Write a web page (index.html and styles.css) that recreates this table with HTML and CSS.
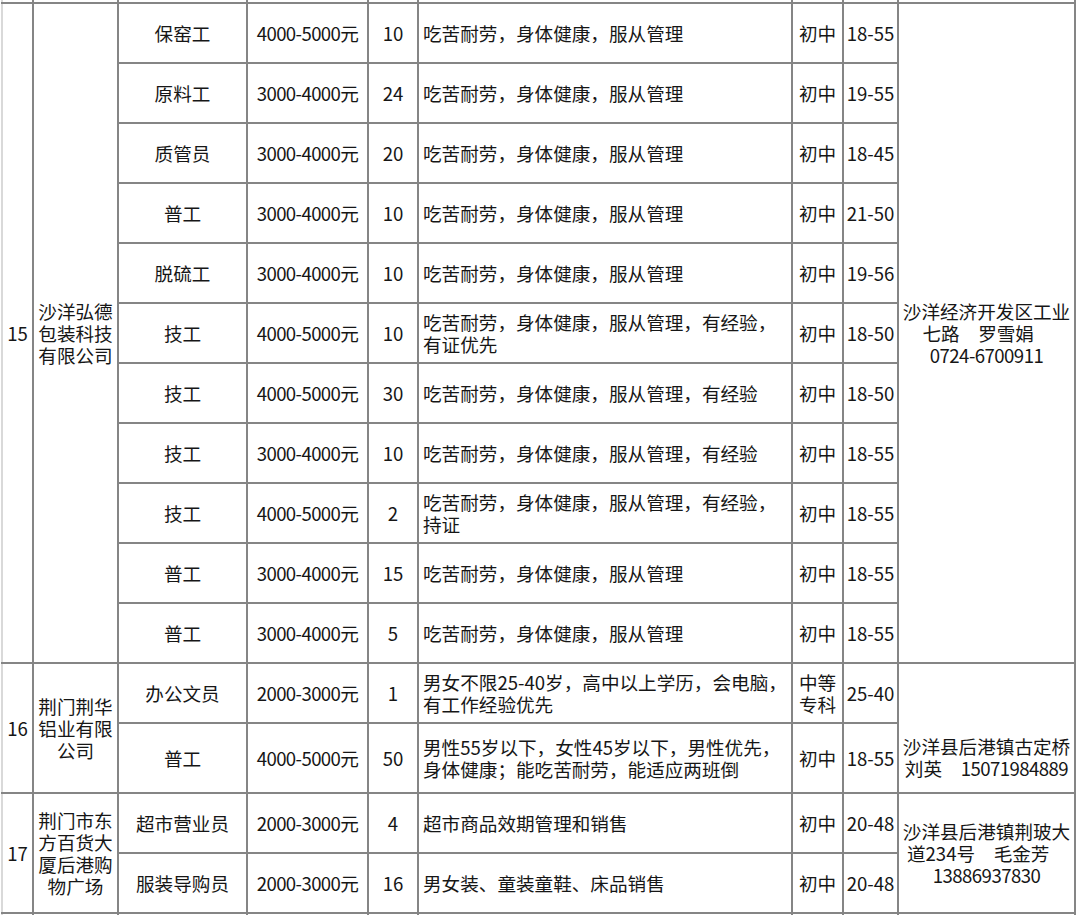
FILE: index.html
```html
<!DOCTYPE html>
<html lang="zh-CN">
<head>
<meta charset="utf-8">
<title>招聘信息</title>
<link rel="stylesheet" href="styles.css">
</head>
<body>
<table class="jobs">
  <colgroup>
    <col class="c-no"><col class="c-co"><col class="c-job"><col class="c-pay"><col class="c-cnt"><col class="c-req"><col class="c-edu"><col class="c-age"><col class="c-addr">
  </colgroup>
  <tbody>
    <tr class="stub top"><td class="no"></td><td></td><td></td><td></td><td></td><td></td><td></td><td></td><td></td></tr>

    <tr>
      <td class="no" rowspan="11">15</td>
      <td class="co" rowspan="11">沙洋弘德包装科技有限公司</td>
      <td>保窑工</td><td class="pay">4000-5000元</td><td>10</td><td class="req">吃苦耐劳，身体健康，服从管理</td><td>初中</td><td>18-55</td>
      <td class="addr" rowspan="11">沙洋经济开发区工业<br>七路　罗雪娟&nbsp;&nbsp;&nbsp;&nbsp;<br><span class="tel">0724-6700911</span></td>
    </tr>
    <tr><td>原料工</td><td class="pay">3000-4000元</td><td>24</td><td class="req">吃苦耐劳，身体健康，服从管理</td><td>初中</td><td>19-55</td></tr>
    <tr><td>质管员</td><td class="pay">3000-4000元</td><td>20</td><td class="req">吃苦耐劳，身体健康，服从管理</td><td>初中</td><td>18-45</td></tr>
    <tr><td>普工</td><td class="pay">3000-4000元</td><td>10</td><td class="req">吃苦耐劳，身体健康，服从管理</td><td>初中</td><td>21-50</td></tr>
    <tr><td>脱硫工</td><td class="pay">3000-4000元</td><td>10</td><td class="req">吃苦耐劳，身体健康，服从管理</td><td>初中</td><td>19-56</td></tr>
    <tr><td>技工</td><td class="pay">4000-5000元</td><td>10</td><td class="req">吃苦耐劳，身体健康，服从管理，有经验，<br>有证优先</td><td>初中</td><td>18-50</td></tr>
    <tr><td>技工</td><td class="pay">4000-5000元</td><td>30</td><td class="req">吃苦耐劳，身体健康，服从管理，有经验</td><td>初中</td><td>18-50</td></tr>
    <tr><td>技工</td><td class="pay">3000-4000元</td><td>10</td><td class="req">吃苦耐劳，身体健康，服从管理，有经验</td><td>初中</td><td>18-55</td></tr>
    <tr><td>技工</td><td class="pay">4000-5000元</td><td>2</td><td class="req">吃苦耐劳，身体健康，服从管理，有经验，<br>持证</td><td>初中</td><td>18-55</td></tr>
    <tr><td>普工</td><td class="pay">3000-4000元</td><td>15</td><td class="req">吃苦耐劳，身体健康，服从管理</td><td>初中</td><td>18-55</td></tr>
    <tr><td>普工</td><td class="pay">3000-4000元</td><td>5</td><td class="req">吃苦耐劳，身体健康，服从管理</td><td>初中</td><td>18-55</td></tr>

    <tr>
      <td class="no" rowspan="2">16</td>
      <td class="co" rowspan="2">荆门荆华铝业有限公司</td>
      <td>办公文员</td><td class="pay">2000-3000元</td><td>1</td><td class="req">男女不限25-40岁，高中以上学历，会电脑，<br>有工作经验优先</td><td>中等<br>专科</td><td>25-40</td>
      <td class="addr low" rowspan="2">沙洋县后港镇古定桥<br>刘英　<span class="tel">15071984889</span></td>
    </tr>
    <tr class="tall"><td>普工</td><td class="pay">4000-5000元</td><td>50</td><td class="req">男性55岁以下，女性45岁以下，男性优先，<br>身体健康；能吃苦耐劳，能适应两班倒</td><td>初中</td><td>18-55</td></tr>

    <tr>
      <td class="no" rowspan="2">17</td>
      <td class="co" rowspan="2">荆门市东方百货大厦后港购物广场</td>
      <td>超市营业员</td><td class="pay">2000-3000元</td><td>4</td><td class="req">超市商品效期管理和销售</td><td>初中</td><td>20-48</td>
      <td class="addr" rowspan="2">沙洋县后港镇荆玻大<br>道234号　毛金芳&nbsp;&nbsp;&nbsp;&nbsp;<br><span class="tel">13886937830</span></td>
    </tr>
    <tr><td>服装导购员</td><td class="pay">2000-3000元</td><td>16</td><td class="req">男女装、童装童鞋、床品销售</td><td>初中</td><td>20-48</td></tr>

    <tr class="stub bottom"><td class="no"></td><td></td><td></td><td></td><td></td><td></td><td></td><td></td><td></td></tr>
  </tbody>
</table>
</body>
</html>
```

FILE: styles.css
```css
html, body {
  margin: 0;
  padding: 0;
  background: #ffffff;
  height: 915px;
  overflow: hidden;
}

body {
  font-family: "Noto Sans CJK SC", "Noto Sans", sans-serif;
  font-size: 18.6px;
  color: #161616;
}

.jobs {
  border-collapse: collapse;
  table-layout: fixed;
  width: 1075px;
  margin-left: 1px;
}

.c-no { width: 31px; }
.c-co { width: 85px; }
.c-job { width: 129px; }
.c-pay { width: 121px; }
.c-cnt { width: 50px; }
.c-req { width: 374px; }
.c-edu { width: 51px; }
.c-age { width: 55px; }
.c-addr { width: 177px; }

.jobs td {
  border: 2px solid #858585;
  padding: 0 2px;
  text-align: center;
  vertical-align: middle;
  line-height: 22px;
  white-space: normal;
}

.jobs tr { height: 60px; }
.jobs tr.tall { height: 70px; }

.jobs td.no {
  border-left-color: #d9d9d9;
  padding: 0;
}

.jobs td.co {
  padding: 0 4px;
}

.jobs td.pay {
  letter-spacing: -0.6px;
}

.jobs td.req {
  text-align: left;
  padding-left: 4px;
}

.jobs td.addr.low {
  padding-top: 58px;
}

.tel {
  letter-spacing: -0.55px;
}

.jobs tr.stub { height: 3px; }
.jobs tr.stub td { padding: 0; }
.jobs tr.stub.top td { border-top: 0; }
.jobs tr.stub.bottom { height: 30px; }
.jobs tr.stub.bottom td { border-bottom: 0; }
```
